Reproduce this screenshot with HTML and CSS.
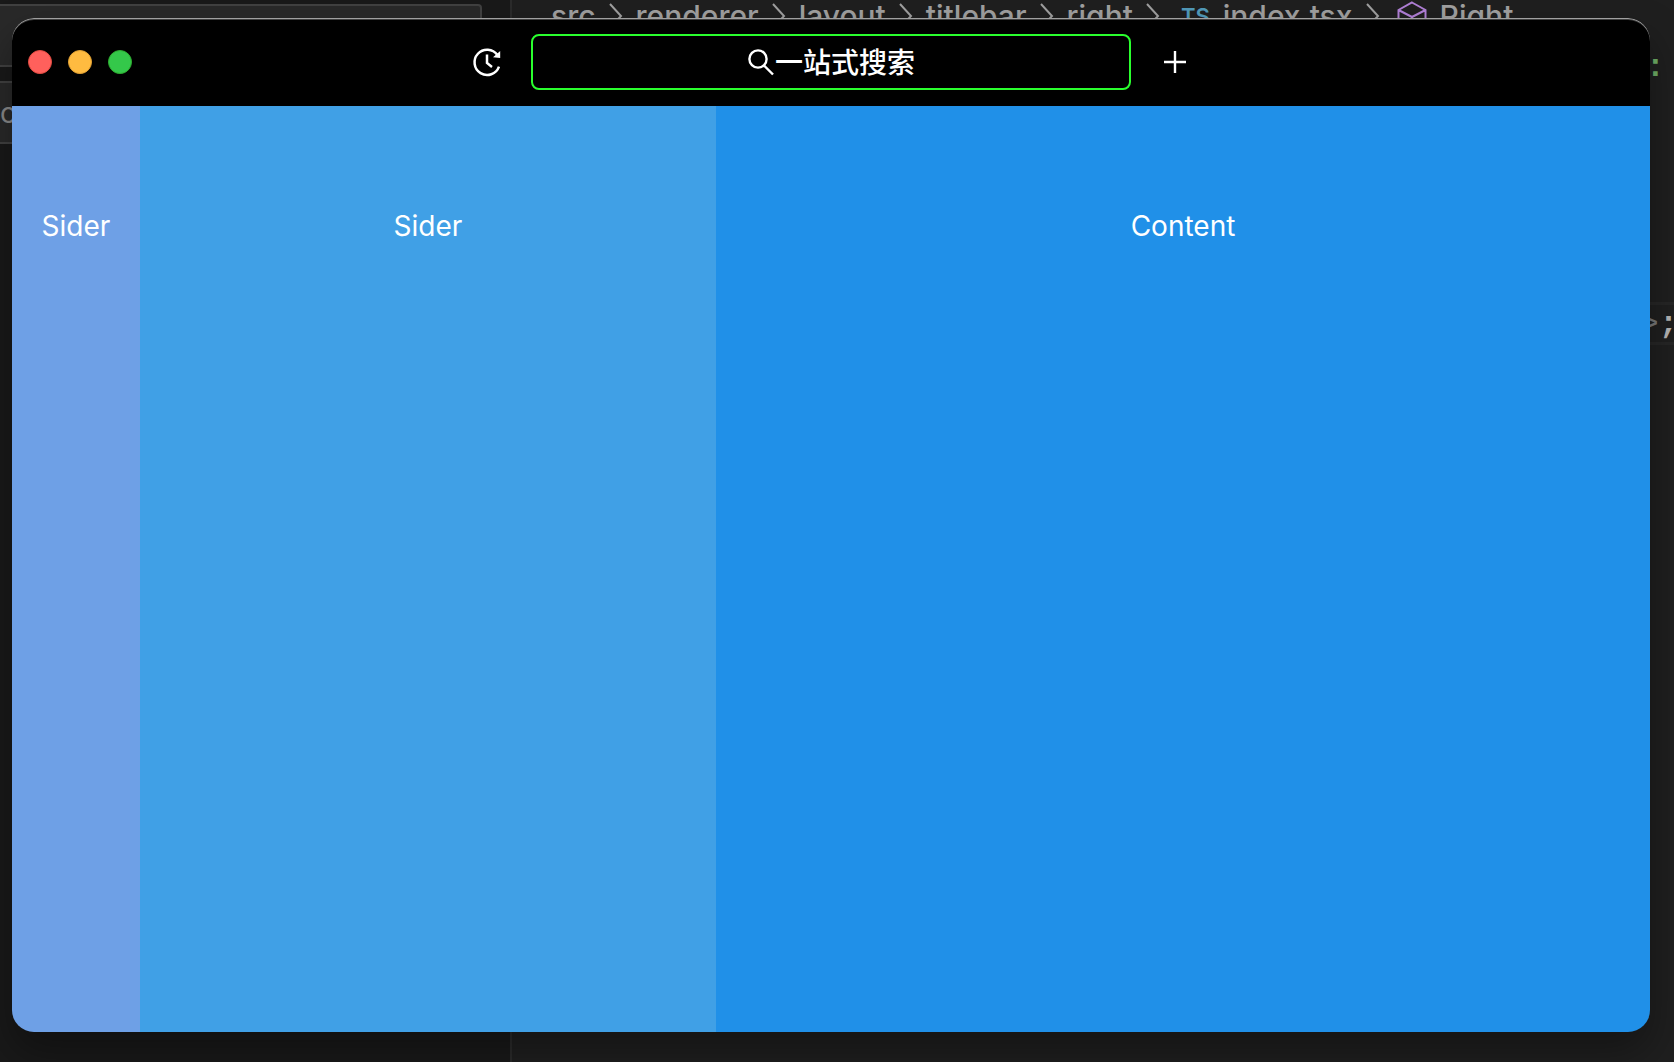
FILE: index.html
```html
<!DOCTYPE html>
<html lang="zh-CN">
<head>
<meta charset="utf-8">
<title>一站式搜索</title>
<meta name="viewport" content="width=device-width, initial-scale=1">
<link rel="stylesheet" href="styles.css">
</head>
<body>
<div class="editor">
  <aside class="editor-side">
    <div class="field"></div>
    <div class="field">c</div>
  </aside>
  <div class="editor-main">
    <nav class="crumbs" aria-label="Breadcrumb">
      <span>src</span>
      <svg class="chevron" viewBox="0 0 14 26"><path d="M1 1l11 12L1 25"/></svg>
      <span>renderer</span>
      <svg class="chevron" viewBox="0 0 14 26"><path d="M1 1l11 12L1 25"/></svg>
      <span>layout</span>
      <svg class="chevron" viewBox="0 0 14 26"><path d="M1 1l11 12L1 25"/></svg>
      <span>titlebar</span>
      <svg class="chevron" viewBox="0 0 14 26"><path d="M1 1l11 12L1 25"/></svg>
      <span>right</span>
      <svg class="chevron" viewBox="0 0 14 26"><path d="M1 1l11 12L1 25"/></svg>
      <span class="file"><b class="ts">TS</b>index.tsx</span>
      <svg class="chevron" viewBox="0 0 14 26"><path d="M1 1l11 12L1 25"/></svg>
      <span class="symbol"><svg class="cube" viewBox="0 0 30 30"><path d="M15 1.500L28.500 9v13L15 29 1.500 22V9zM1.500 9L15 16l13.500-7M15 16v13"/></svg>Right</span>
    </nav>
    <div class="code">
      <div class="line added">:</div>
      <div class="line current"><span class="bracket">&gt;</span>;</div>
    </div>
  </div>
</div>

<main class="window">
  <header class="titlebar">
    <div class="lights">
      <button class="light close" aria-label="Close"></button>
      <button class="light minimize" aria-label="Minimize"></button>
      <button class="light zoom" aria-label="Zoom"></button>
    </div>
    <div class="tools">
      <button class="tool" aria-label="History">
        <svg viewBox="0 0 32 32" stroke-width="2.500"><path d="M28 20.600A12.600 12.600 0 1 1 26.400 9"/><path class="tip" d="M29.200 5v7l-7.200-.8z"/><path d="M16 8.500v8.500l5 4"/></svg>
      </button>
      <button class="search">
        <svg class="glass" viewBox="0 0 28 28" stroke-width="2.400"><circle cx="11" cy="11" r="8.600"/><path d="M17 17.500l9 9"/></svg><span>一站式搜索</span>
      </button>
      <button class="tool" aria-label="Add">
        <svg viewBox="0 0 32 32" stroke-width="2.400"><path d="M16 5v22M5 16h22"/></svg>
      </button>
    </div>
  </header>
  <div class="layout">
    <aside class="pane rail">Sider</aside>
    <aside class="pane list">Sider</aside>
    <section class="pane content">Content</section>
  </div>
</main>
</body>
</html>
```
FILE: styles.css
```css
* {
  box-sizing: border-box;
}

body {
  display: flex;
  min-height: 100vh;
  margin: 0;
  padding: 18px 24px 30px 12px;
  background: #181818;
  color: #fff;
  font-family: Inter, "Noto Sans CJK SC", sans-serif;
}

button {
  padding: 0;
  border: 0;
  background: none;
  color: inherit;
  font: inherit;
}

svg {
  display: block;
  flex: none;
  fill: none;
  stroke: currentColor;
}

/* Editor behind the window */
.editor {
  position: absolute;
  inset: 0;
  display: grid;
  grid-template-columns: 512px 1fr;
  overflow: hidden;
}

.editor-side {
  display: flex;
  flex-direction: column;
  gap: 14px;
  padding: 4px 28px 0 0;
  border-right: 2px solid #2b2b2b;
  background: #191919;
}

.field {
  height: 63px;
  border: 2px solid #414141;
  border-left: 0;
  border-radius: 0 4px 4px 0;
  background: #292929;
  color: #8a8a8a;
  font-size: 28px;
  line-height: 60px;
}

.editor-main {
  min-width: 0;
  overflow: hidden;
  background: #1f1f1f;
}

.crumbs {
  display: flex;
  align-items: center;
  gap: 13px;
  height: 32px;
  padding-left: 39px;
  color: #a0a0a0;
  font-size: 30px;
  font-weight: 500;
  line-height: 32px;
  white-space: nowrap;
}

.chevron {
  width: 14px;
  height: 26px;
  stroke-width: 2;
}

.file,
.symbol {
  display: flex;
  align-items: center;
  gap: 13px;
}

.file {
  padding-left: 8px;
}

.ts {
  color: #519aba;
  font-size: 22px;
  font-weight: 600;
}

.symbol {
  padding-left: 4px;
}

.cube {
  width: 30px;
  height: 30px;
  color: #b180d7;
  stroke-width: 2;
}

.code {
  display: flex;
  flex-direction: column;
  gap: 211px;
  margin-right: -4px;
  padding-top: 16px;
  font: 700 32px/40px "Liberation Mono", monospace;
  text-align: right;
}

.line {
  height: 43px;
}

.added {
  padding-right: 13px;
  color: #6fae66;
}

.current {
  border: solid #262626;
  border-width: 3px 0;
  color: #b4b4b4;
}

.bracket {
  color: #777;
  font-weight: 400;
}

/* Application window */
.window {
  position: relative;
  display: flex;
  flex: 1;
  flex-direction: column;
  overflow: hidden;
  border-radius: 22px;
  box-shadow: 0 20px 40px rgba(0, 0, 0, 0.35);
}

.titlebar {
  display: grid;
  grid-template-columns: 1fr auto 1fr;
  align-items: center;
  height: 88px;
  border-radius: 22px 22px 0 0;
  background: #000;
  box-shadow: inset 0 1px #a0a0a0, inset 0 2px #404040;
}

.lights {
  display: flex;
  gap: 16px;
  padding-left: 16px;
}

.light {
  width: 24px;
  height: 24px;
  border: 1px solid;
  border-radius: 50%;
}

.close {
  border-color: #e24b41;
  background: #ff605c;
}

.minimize {
  border-color: #e1a032;
  background: #ffbb40;
}

.zoom {
  border-color: #2dac2f;
  background: #34c84a;
}

.tools {
  display: flex;
  align-items: center;
  gap: 28px;
}

.tool,
.tool svg {
  width: 32px;
  height: 32px;
}

.tip {
  fill: currentColor;
  stroke: none;
}

.search {
  display: flex;
  align-items: center;
  justify-content: center;
  width: 600px;
  height: 56px;
  border: 2px solid #2aff2e;
  border-radius: 8px;
  font-family: "Noto Sans CJK SC", sans-serif;
  font-size: 28px;
  font-weight: 500;
}

.search span {
  padding-bottom: 2px;
}

.glass {
  width: 28px;
  height: 28px;
}

.layout {
  display: flex;
  flex: 1;
}

.pane {
  font-size: 28px;
  line-height: 240px;
  text-align: center;
}

.rail {
  width: 128px;
  background: #6ea0e6;
}

.list {
  width: 576px;
  background: #40a0e6;
}

.content {
  flex: 1;
  background: #2090e8;
}
```
